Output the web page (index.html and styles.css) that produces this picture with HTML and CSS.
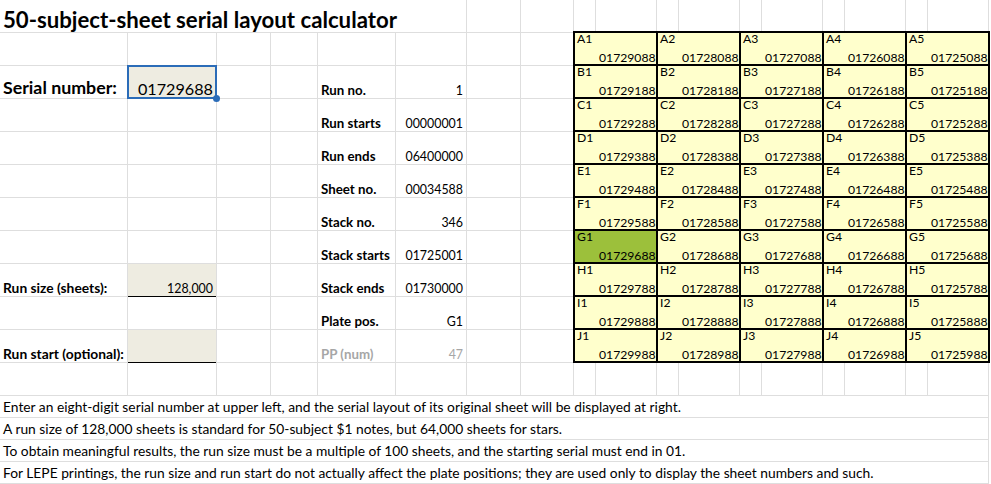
FILE: index.html
```html
<!DOCTYPE html>
<html lang="en">
<head>
<meta charset="utf-8">
<title>50-subject-sheet serial layout calculator</title>
<link rel="stylesheet" href="styles.css">
</head>
<body>
<div class="sheet">
  <!-- row 1 -->
  <div class="c title">50-subject-sheet serial layout calculator</div>
  <div class="c"></div><div class="c"></div><div class="c"></div><div class="c"></div><div class="c"></div><div class="c"></div>
  <div class="c"></div><div class="c"></div><div class="c"></div><div class="c"></div><div class="c"></div><div class="c"></div>
  <!-- row 2 -->
  <div class="c"></div><div class="c"></div><div class="c"></div><div class="c"></div><div class="c"></div><div class="c"></div><div class="c"></div><div class="c"></div>
  <!-- row 3 -->
  <div class="c big">Serial number:</div>
  <div class="c num serial inp sel">01729688</div>
  <div class="c"></div><div class="c"></div>
  <div class="c lbl">Run no.</div>
  <div class="c num">1</div>
  <div class="c"></div><div class="c"></div>
  <!-- row 4 -->
  <div class="c"></div><div class="c"></div><div class="c"></div><div class="c"></div>
  <div class="c lbl">Run starts</div>
  <div class="c num">00000001</div>
  <div class="c"></div><div class="c"></div>
  <!-- row 5 -->
  <div class="c"></div><div class="c"></div><div class="c"></div><div class="c"></div>
  <div class="c lbl">Run ends</div>
  <div class="c num">06400000</div>
  <div class="c"></div><div class="c"></div>
  <!-- row 6 -->
  <div class="c"></div><div class="c"></div><div class="c"></div><div class="c"></div>
  <div class="c lbl">Sheet no.</div>
  <div class="c num">00034588</div>
  <div class="c"></div><div class="c"></div>
  <!-- row 7 -->
  <div class="c"></div><div class="c"></div><div class="c"></div><div class="c"></div>
  <div class="c lbl">Stack no.</div>
  <div class="c num">346</div>
  <div class="c"></div><div class="c"></div>
  <!-- row 8 -->
  <div class="c"></div><div class="c"></div><div class="c"></div><div class="c"></div>
  <div class="c lbl">Stack starts</div>
  <div class="c num">01725001</div>
  <div class="c"></div><div class="c"></div>
  <!-- row 9 -->
  <div class="c lbl side">Run size (sheets):</div>
  <div class="c num inp uline">128,000</div>
  <div class="c"></div><div class="c"></div>
  <div class="c lbl">Stack ends</div>
  <div class="c num">01730000</div>
  <div class="c"></div><div class="c"></div>
  <!-- row 10 -->
  <div class="c"></div><div class="c"></div><div class="c"></div><div class="c"></div>
  <div class="c lbl">Plate pos.</div>
  <div class="c num">G1</div>
  <div class="c"></div><div class="c"></div>
  <!-- row 11 -->
  <div class="c lbl side">Run start (optional):</div>
  <div class="c inp uline"></div>
  <div class="c"></div><div class="c"></div>
  <div class="c lbl dim">PP (num)</div>
  <div class="c num dim">47</div>
  <div class="c"></div><div class="c"></div>
  <!-- row 12 -->
  <div class="c"></div><div class="c"></div><div class="c"></div><div class="c"></div><div class="c"></div><div class="c"></div>
  <div class="c"></div><div class="c"></div><div class="c"></div><div class="c"></div><div class="c"></div><div class="c"></div>
  <div class="c"></div><div class="c"></div><div class="c"></div><div class="c"></div><div class="c"></div><div class="c"></div>
  <!-- notes -->
  <div class="c note">Enter an eight-digit serial number at upper left, and the serial layout of its original sheet will be displayed at right.</div>
  <div class="c note">A run size of 128,000 sheets is standard for 50-subject $1 notes, but 64,000 sheets for stars.</div>
  <div class="c note">To obtain meaningful results, the run size must be a multiple of 100 sheets, and the starting serial must end in 01.</div>
  <div class="c note">For LEPE printings, the run size and run start do not actually affect the plate positions; they are used only to display the sheet numbers and such.</div>

  <!-- plate layout -->
  <div class="plate">
    <div class="pc"><span class="pl">A1</span><span class="ps">01729088</span></div>
    <div class="pc"><span class="pl">A2</span><span class="ps">01728088</span></div>
    <div class="pc"><span class="pl">A3</span><span class="ps">01727088</span></div>
    <div class="pc"><span class="pl">A4</span><span class="ps">01726088</span></div>
    <div class="pc"><span class="pl">A5</span><span class="ps">01725088</span></div>
    <div class="pc"><span class="pl">B1</span><span class="ps">01729188</span></div>
    <div class="pc"><span class="pl">B2</span><span class="ps">01728188</span></div>
    <div class="pc"><span class="pl">B3</span><span class="ps">01727188</span></div>
    <div class="pc"><span class="pl">B4</span><span class="ps">01726188</span></div>
    <div class="pc"><span class="pl">B5</span><span class="ps">01725188</span></div>
    <div class="pc"><span class="pl">C1</span><span class="ps">01729288</span></div>
    <div class="pc"><span class="pl">C2</span><span class="ps">01728288</span></div>
    <div class="pc"><span class="pl">C3</span><span class="ps">01727288</span></div>
    <div class="pc"><span class="pl">C4</span><span class="ps">01726288</span></div>
    <div class="pc"><span class="pl">C5</span><span class="ps">01725288</span></div>
    <div class="pc"><span class="pl">D1</span><span class="ps">01729388</span></div>
    <div class="pc"><span class="pl">D2</span><span class="ps">01728388</span></div>
    <div class="pc"><span class="pl">D3</span><span class="ps">01727388</span></div>
    <div class="pc"><span class="pl">D4</span><span class="ps">01726388</span></div>
    <div class="pc"><span class="pl">D5</span><span class="ps">01725388</span></div>
    <div class="pc"><span class="pl">E1</span><span class="ps">01729488</span></div>
    <div class="pc"><span class="pl">E2</span><span class="ps">01728488</span></div>
    <div class="pc"><span class="pl">E3</span><span class="ps">01727488</span></div>
    <div class="pc"><span class="pl">E4</span><span class="ps">01726488</span></div>
    <div class="pc"><span class="pl">E5</span><span class="ps">01725488</span></div>
    <div class="pc"><span class="pl">F1</span><span class="ps">01729588</span></div>
    <div class="pc"><span class="pl">F2</span><span class="ps">01728588</span></div>
    <div class="pc"><span class="pl">F3</span><span class="ps">01727588</span></div>
    <div class="pc"><span class="pl">F4</span><span class="ps">01726588</span></div>
    <div class="pc"><span class="pl">F5</span><span class="ps">01725588</span></div>
    <div class="pc hit"><span class="pl">G1</span><span class="ps">01729688</span></div>
    <div class="pc"><span class="pl">G2</span><span class="ps">01728688</span></div>
    <div class="pc"><span class="pl">G3</span><span class="ps">01727688</span></div>
    <div class="pc"><span class="pl">G4</span><span class="ps">01726688</span></div>
    <div class="pc"><span class="pl">G5</span><span class="ps">01725688</span></div>
    <div class="pc"><span class="pl">H1</span><span class="ps">01729788</span></div>
    <div class="pc"><span class="pl">H2</span><span class="ps">01728788</span></div>
    <div class="pc"><span class="pl">H3</span><span class="ps">01727788</span></div>
    <div class="pc"><span class="pl">H4</span><span class="ps">01726788</span></div>
    <div class="pc"><span class="pl">H5</span><span class="ps">01725788</span></div>
    <div class="pc"><span class="pl">I1</span><span class="ps">01729888</span></div>
    <div class="pc"><span class="pl">I2</span><span class="ps">01728888</span></div>
    <div class="pc"><span class="pl">I3</span><span class="ps">01727888</span></div>
    <div class="pc"><span class="pl">I4</span><span class="ps">01726888</span></div>
    <div class="pc"><span class="pl">I5</span><span class="ps">01725888</span></div>
    <div class="pc"><span class="pl">J1</span><span class="ps">01729988</span></div>
    <div class="pc"><span class="pl">J2</span><span class="ps">01728988</span></div>
    <div class="pc"><span class="pl">J3</span><span class="ps">01727988</span></div>
    <div class="pc"><span class="pl">J4</span><span class="ps">01726988</span></div>
    <div class="pc"><span class="pl">J5</span><span class="ps">01725988</span></div>
  </div>
</div>
</body>
</html>
```

FILE: styles.css
```css
* { box-sizing: border-box; }
html, body { margin: 0; background: #fff; }
body {
  font-family: Lato, "Liberation Sans", sans-serif;
  color: #000;
}
.sheet {
  display: grid;
  grid-template-columns: 127px 88px 53px 46px 77px 70px 53px 52px repeat(5, 21px 60px);
  grid-template-rows: repeat(12, 32px) repeat(4, 21px);
  gap: 1px;
  padding: 0 1px 1px 0;
  width: 989px;
  background: #dedede;
}
.c {
  background: #fff;
  display: flex;
  align-items: flex-end;
  padding: 0 3px 1px;
  font-size: 12.4px;
  line-height: 1;
  white-space: nowrap;
  min-width: 0;
}
.title {
  grid-column: 1 / 7;
  font-size: 22.2px;
  font-weight: 700;
}
.lbl { font-weight: 700; font-size: 13.3px; }
.lbl.side { font-size: 13.8px; }
.big { font-weight: 700; font-size: 17.8px; }
.num { justify-content: flex-end; }
.serial { font-size: 16.2px; }
.inp { background: #eeece1; }
.sel {
  position: relative;
  z-index: 1;
  box-shadow: 0 0 0 1px #2b6cb8, inset 0 0 0 1px #2b6cb8;
}
.sel::after {
  content: "";
  position: absolute;
  right: -4px;
  bottom: -4px;
  width: 7px;
  height: 7px;
  border-radius: 50%;
  background: #2b6cb8;
}
.uline { box-shadow: 0 1px 0 #000; }
.dim { color: #a6a6a6; }
.note {
  grid-column: 1 / -1;
  font-size: 13.8px;
  padding-bottom: 3.5px;
}
.plate {
  grid-column: 9 / 19;
  grid-row: 2 / 12;
  margin: -2px -2px -1px -1px;
  padding: 2px;
  background: #000;
  display: grid;
  grid-template-columns: repeat(5, 1fr);
  grid-template-rows: repeat(10, 1fr);
  gap: 2px;
}
.pc {
  background: #ffffcc;
  display: flex;
  flex-direction: column;
  justify-content: space-between;
  padding: 0 0 0 2px;
  font-size: 12.2px;
  line-height: 1;
  white-space: nowrap;
}
.pc.hit { background: #9cc03b; }
.pl { line-height: 1.05; }
.ps { padding-left: 22px; }
```
